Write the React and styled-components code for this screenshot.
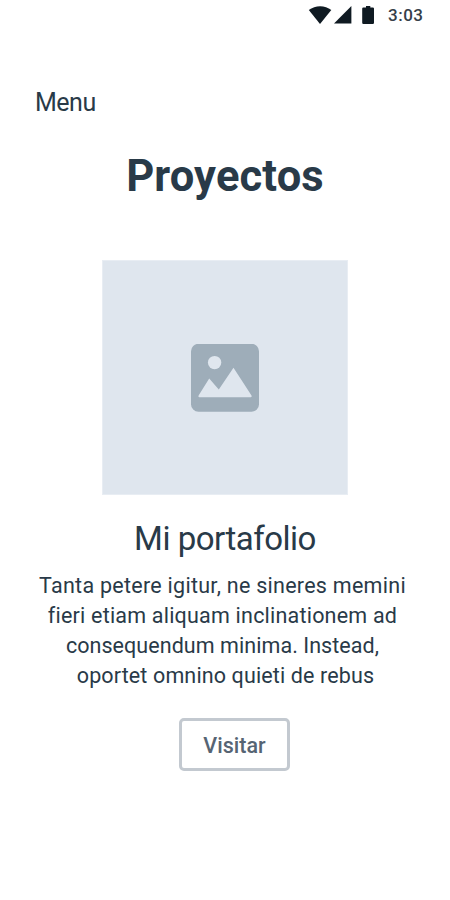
import React from "react";
import styled, { createGlobalStyle } from "styled-components";

const GlobalStyle = createGlobalStyle`
  * { box-sizing: border-box; }
  body { margin: 0; background: #fff; }
`;

const Screen = styled.div`
  display: flex;
  flex-direction: column;
  width: 450px;
  height: 900px;
  background: #fff;
  color: #293a48;
  font-family: Roboto, "Liberation Sans", sans-serif;
  overflow: hidden;
`;

const StatusBar = styled.header`
  display: flex;
  align-items: center;
  height: 30px;
  padding-left: 308px;
`;

const StatusIcons = styled.svg`
  display: block;
  width: 68px;
  height: 20px;
`;

const Clock = styled.time`
  margin-left: 12px;
  font-size: 17px;
  line-height: 30px;
  font-weight: 500;
  letter-spacing: 0.5px;
  white-space: nowrap;
  color: #364049;
`;

const Nav = styled.nav`
  display: flex;
  padding: 58px 0 0 35px;
`;

const MenuLink = styled.span`
  font-size: 25px;
  line-height: 30px;
  letter-spacing: -0.5px;
`;

const Title = styled.h1`
  margin: 34px 0 0;
  font-size: 43.5px;
  line-height: 50px;
  font-weight: 700;
  letter-spacing: 0.15px;
  text-align: center;
`;

const Project = styled.main`
  display: flex;
  flex-direction: column;
  align-items: center;
  padding-top: 58px;
`;

const ImagePlaceholder = styled.div`
  display: flex;
  align-items: center;
  justify-content: center;
  width: 246px;
  height: 235px;
  border: 1px solid #e8edf3;
  background: #dfe6ee;
`;

const PictureIcon = styled.svg`
  display: block;
  width: 68px;
  height: 68px;
`;

const ProjectName = styled.h2`
  margin: 24px 0 0;
  font-size: 33px;
  line-height: 40px;
  font-weight: 400;
  letter-spacing: -0.5px;
`;

const Description = styled.p`
  margin: 12px 0 0;
  font-size: 21.5px;
  line-height: 30px;
  text-align: center;
`;

const Line = styled.span`
  display: block;
  padding-right: ${(p) => (p.$last ? 0 : 5)}px;
  padding-left: ${(p) => (p.$last ? 1 : 0)}px;
  white-space: nowrap;
  letter-spacing: ${(p) => p.$spacing}px;
`;

const VisitButton = styled.button`
  width: 111px;
  height: 53px;
  margin: 27px 0 0 19px;
  padding: 2px 0 0;
  border: 3px solid #c3c9d0;
  border-radius: 5px;
  background: #fff;
  color: #566473;
  font: 500 21.5px/45px Roboto, "Liberation Sans", sans-serif;
  letter-spacing: 0;
`;

const lines = [
  ["Tanta petere igitur, ne sineres memini", 0.27],
  ["fieri etiam aliquam inclinationem ad", 0.21],
  ["consequendum minima. Instead,", 0.06],
  ["oportet omnino quieti de rebus", 0.13],
];

export default function App() {
  return (
    <Screen>
      <GlobalStyle />
      <StatusBar>
        <StatusIcons viewBox="0 0 68 20" fill="#0f1a22" aria-hidden="true">
          <path d="M.8 5.1C7.3-.1 17-.1 23.3 5.1L12 19Z" />
          <path d="M43.4 1V18.6H26Z" />
          <path d="M55.4 2.4H58V1h4.3v1.4h2.5q1.2 0 1.2 1.2v14.2q0 1.2-1.2 1.2h-9.4q-1.2 0-1.2-1.2V3.6q0-1.2 1.2-1.2Z" />
        </StatusIcons>
        <Clock>3:03</Clock>
      </StatusBar>
      <Nav>
        <MenuLink>Menu</MenuLink>
      </Nav>
      <Title>Proyectos</Title>
      <Project>
        <ImagePlaceholder>
          <PictureIcon viewBox="0 0.4 68 68" aria-hidden="true">
            <rect y="0.2" width="68" height="68" rx="7.5" fill="#9eadb9" />
            <g fill="#dfe6ee">
              <circle cx="23.6" cy="19" r="6.7" />
              <path d="M7.6 52 18.2 34.8 27.8 45.8 42.5 24.2 60.5 52q.8 1.6-.8 1.6H8.4q-1.6 0-.8-1.6Z" />
            </g>
          </PictureIcon>
        </ImagePlaceholder>
        <ProjectName>Mi portafolio</ProjectName>
        <Description>
          {lines.map(([text, spacing], i) => (
            <Line key={text} $spacing={spacing} $last={i === lines.length - 1}>
              {text}
            </Line>
          ))}
        </Description>
        <VisitButton type="button">Visitar</VisitButton>
      </Project>
    </Screen>
  );
}
